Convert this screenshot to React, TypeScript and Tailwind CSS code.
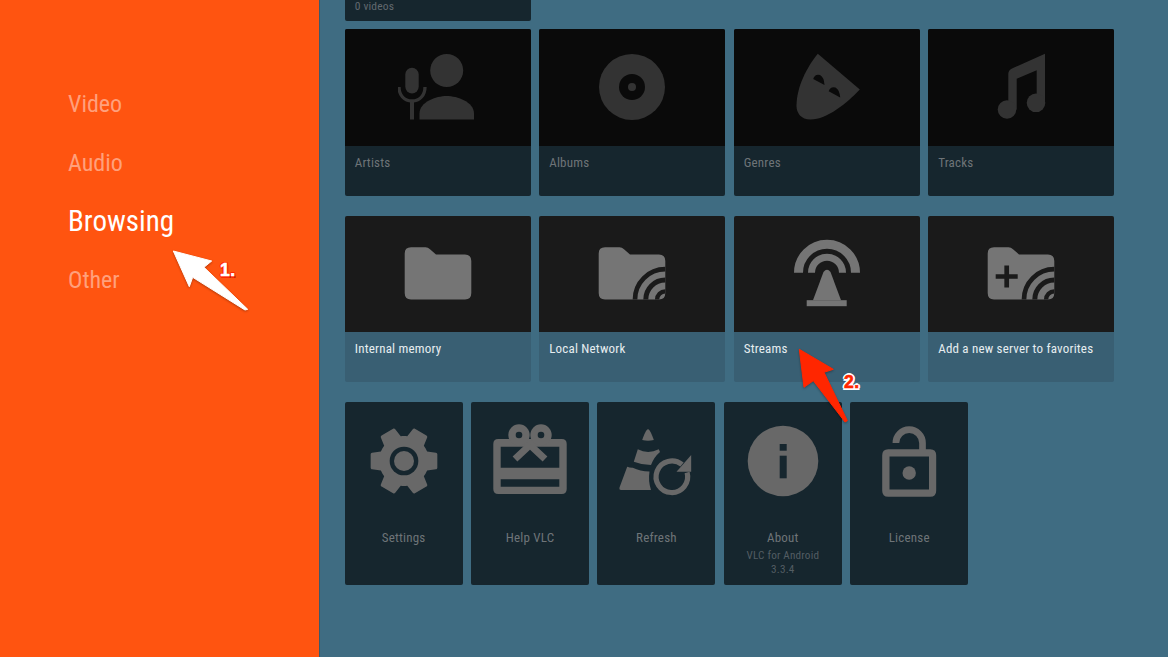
import type { ReactNode } from "react";

const roboto = "font-['Roboto',sans-serif] [font-stretch:75%]";

function Icon({ children, color }: { children: ReactNode; color: string }) {
  return (
    <svg viewBox="0 0 80 80" className="h-20 w-20" fill={color} style={{ color }}>
      {children}
    </svg>
  );
}

const FOLDER =
  "M13 13.2H27.5Q30 13.2 32 15.2L38 20.5H67Q73.3 20.5 73.3 27V59Q73.3 65.5 67 65.5H13Q6.7 65.5 6.7 59V19.5Q6.7 13.2 13 13.2Z";

function Waves({ bg }: { bg: string }) {
  const arc = (r: number) => `M${73.3 - r} 65.5A${r} ${r} 0 0 1 73.3 ${65.5 - r}`;
  return (
    <g fill="none" stroke={bg}>
      <path d={arc(8.2)} strokeWidth="4.3" />
      <path d={arc(19.5)} strokeWidth="5" />
      <path d={arc(30.3)} strokeWidth="4.7" />
    </g>
  );
}

const icons: Record<string, ReactNode> = {
  artists: (
    <Icon color="#333333">
      <circle cx="48.7" cy="23.5" r="16.5" />
      <path d="M21.5 72.5V66.5C21.5 55 38 49 48.7 49S76 55 76 66.5V72.5Z" />
      <rect x="7.3" y="20.8" width="13.4" height="25.7" rx="6.7" />
      <path d="M1 40C1 48 6 54 14 54S27 48 27 40" fill="none" stroke="#333333" strokeWidth="3.3" />
      <rect x="12" y="53" width="4" height="19.5" />
    </Icon>
  ),
  albums: (
    <Icon color="#333333">
      <circle cx="40" cy="40" r="33" />
      <circle cx="40" cy="40" r="13" fill="#0a0a0a" />
      <circle cx="40" cy="40" r="4" />
    </Icon>
  ),
  genres: (
    <Icon color="#333333">
      <path d="M30.8 6.8L72.8 42.5C60 56 40 72.5 23.5 72.5C14 72.5 9.5 66 9.5 59C9.5 40 20 20 30.8 6.8Z" />
      <path d="M26.2 32Q28 26.5 33 28Q37 30 37.5 38Z" fill="#0a0a0a" />
      <path d="M41.7 44.2Q43.5 39 48.5 40.5Q52.5 42.5 53.2 50.5Z" fill="#0a0a0a" />
    </Icon>
  ),
  tracks: (
    <Icon color="#333333">
      <path d="M64 6.8L31 21.5Q27.3 23 27.3 27V62.5H35.7V31.8L55.7 23.2V55.8H64Z" />
      <circle cx="26" cy="62.5" r="9.3" />
      <circle cx="55" cy="55.8" r="9.3" />
    </Icon>
  ),
  folder: (
    <Icon color="#757575">
      <path d={FOLDER} />
    </Icon>
  ),
  network: (
    <Icon color="#757575">
      <path d={FOLDER} />
      <Waves bg="#1a1a1a" />
    </Icon>
  ),
  streams: (
    <Icon color="#757575">
      <g fill="none" stroke="#757575">
        <path d="M11.5 38.8A28.5 28.5 0 0 1 68.5 38.8" strokeWidth="9" />
        <path d="M24.5 38.8A15.5 15.5 0 0 1 55.5 38.8" strokeWidth="7" />
      </g>
      <path d="M36.5 38Q40 33.5 43.5 38L54 66.2H26Z" stroke="#1a1a1a" strokeWidth="2.5" paintOrder="stroke" />
      <rect x="19.7" y="66.2" width="40" height="6" />
    </Icon>
  ),
  addServer: (
    <Icon color="#757575">
      <path d={FOLDER} />
      <Waves bg="#1a1a1a" />
      <path d="M25.7 31.5V53.5M14.7 42.5H36.7" fill="none" stroke="#1a1a1a" strokeWidth="4.7" />
    </Icon>
  ),
  settings: (
    <svg viewBox="0 0 24 24" className="h-20 w-20" fill="#686868">
      <path
        transform="rotate(90 12 12)"
        d="M19.43 12.98c.04-.32.07-.64.07-.98s-.03-.66-.07-.98l2.11-1.65c.19-.15.24-.42.12-.64l-2-3.46c-.12-.22-.39-.3-.61-.22l-2.49 1c-.52-.4-1.08-.73-1.69-.98l-.38-2.65C14.46 2.18 14.25 2 14 2h-4c-.25 0-.46.18-.49.42l-.38 2.65c-.61.25-1.17.59-1.69.98l-2.49-1c-.23-.09-.49 0-.61.22l-2 3.46c-.13.22-.07.49.12.64l2.11 1.65c-.04.32-.07.65-.07.98s.03.66.07.98l-2.11 1.65c-.19.15-.24.42-.12.64l2 3.46c.12.22.39.3.61.22l2.49-1c.52.4 1.08.73 1.69.98l.38 2.65c.03.24.24.42.49.42h4c.25 0 .46-.18.49-.42l.38-2.65c.61-.25 1.17-.59 1.69-.98l2.49 1c.23.09.49 0 .61-.22l2-3.46c.12-.22.07-.49-.12-.64l-2.11-1.65z"
      />
      <circle cx="12" cy="12" r="4.3" fill="#16262e" />
      <circle cx="12" cy="12" r="3" />
    </svg>
  ),
  help: (
    <Icon color="#686868">
      <path
        fillRule="evenodd"
        d="M8.3 18H71.7Q76.7 18 76.7 23V68Q76.7 73 71.7 73H8.3Q3.3 73 3.3 68V23Q3.3 18 8.3 18ZM10.7 25.7V46.7H69.3V25.7ZM10.7 58.3V65.7H69.3V58.3Z"
      />
      <circle cx="29" cy="14" r="10.7" />
      <circle cx="51" cy="14" r="10.7" />
      <circle cx="29" cy="14" r="3.3" fill="#16262e" />
      <circle cx="51" cy="14" r="3.3" fill="#16262e" />
      <path d="M40 24L25 38M40 24L55 38" fill="none" stroke="#686868" strokeWidth="7" />
    </Icon>
  ),
  refresh: (
    <Icon color="#686868">
      <path d="M28.5 13Q30.5 8.3 32 8.3Q33.5 8.3 35.5 13Q37.2 17 37.8 19Q32 20.5 26.2 19Q26.8 17 28.5 13Z" />
      <path d="M21.8 28.3Q32 33.5 42.8 28.3L44 31Q38 36 35 44Q26 44 17.8 40.7Z" />
      <path d="M11.2 45.7Q14 47 16.8 46.8Q24 50.5 33.5 50.5Q32 60 35 69H5Q3 69 3.5 66.5Z" />
      <path d="M66 43.6A15.8 15.8 0 1 0 71.1 51.5" fill="none" stroke="#686868" strokeWidth="5.2" />
      <path d="M75.2 34V50.7H60.5Z" />
    </Icon>
  ),
  about: (
    <Icon color="#686868">
      <circle cx="40" cy="40" r="35.3" />
      <rect x="36.7" y="23" width="7" height="6.7" fill="#16262e" />
      <rect x="36.7" y="34.7" width="7" height="22.6" fill="#16262e" />
    </Icon>
  ),
  license: (
    <Icon color="#686868">
      <path
        fillRule="evenodd"
        d="M19.2 28.3H61.2Q67.2 28.3 67.2 34.3V69.7Q67.2 75.7 61.2 75.7H19.2Q13.2 75.7 13.2 69.7V34.3Q13.2 28.3 19.2 28.3ZM20.5 35.5V68.5H60V35.5Z"
      />
      <circle cx="40.2" cy="52" r="6.7" />
      <path d="M26.9 22A13.3 13.3 0 0 1 53.5 22V30" fill="none" stroke="#686868" strokeWidth="6.7" />
    </Icon>
  ),
};

function MediaCard({ icon, label, dim }: { icon: string; label: string; dim?: boolean }) {
  return (
    <div className={`h-[166.3px] overflow-hidden rounded-[2px] ${dim ? "bg-[#16262e]" : "bg-[#395f73]"}`}>
      <div className={`flex h-[116.4px] items-center justify-center ${dim ? "bg-[#0a0a0a]" : "bg-[#1a1a1a] pt-[1px]"}`}>
        {icons[icon]}
      </div>
      <p
        className={`${roboto} pl-2.5 text-[13px] leading-4 tracking-[0.2px] ${
          dim ? "pt-[9.3px] text-[#6e7478]" : "pt-[8.8px] text-[#e6edf0]"
        }`}
      >
        {label}
      </p>
    </div>
  );
}

function SquareCard({ icon, label, sub }: { icon: string; label: string; sub?: string[] }) {
  return (
    <div className="flex h-[183.3px] flex-col items-center rounded-[2px] bg-[#16262e] pt-[19.3px]">
      {icons[icon]}
      <p className={`${roboto} mt-[29px] text-[13px] leading-4 tracking-[0.2px] text-[#6e7478]`}>{label}</p>
      {sub && (
        <p className={`${roboto} mt-[3.5px] text-center text-[11.2px] leading-[14px] tracking-[0.2px] text-[#535d63]`}>
          {sub.map((s) => (
            <span key={s} className="block">
              {s}
            </span>
          ))}
        </p>
      )}
    </div>
  );
}

function Annotations() {
  return (
    <>
      <svg className="pointer-events-none absolute left-0 top-0 h-[657px] w-[1168px]" viewBox="0 0 1168 657">
        <polygon
          className="drop-shadow-[0_1px_1px_rgba(0,0,0,0.3)]"
          points="173.3,251 211.7,261 204,267.3 247.7,309.3 245,310 192.7,277.3 189.3,286.7"
          fill="#ffffff"
          stroke="#ffffff"
          strokeWidth="1"
          strokeLinejoin="round"
        />
        <polygon
          className="drop-shadow-[0_1px_1px_rgba(0,0,0,0.3)]"
          points="799.3,349.3 833.3,369.3 824,372.3 847.3,420.7 845,422 813.3,380.7 804,387.3"
          fill="#ff2600"
          stroke="#ff2600"
          strokeWidth="1"
          strokeLinejoin="round"
        />
      </svg>
      <span className="absolute left-[220px] top-[260px] font-['Liberation_Sans',sans-serif] text-[17.5px] leading-5 font-bold tracking-[0.5px] text-white [-webkit-text-stroke:0.6px_#ffffff] [text-shadow:1.5px_0_0_#ff2600,-1.5px_0_0_#ff2600,0_1.5px_0_#ff2600,0_-1.5px_0_#ff2600,1.5px_1.5px_0_#c02000,-1px_-1px_0_#ff2600,1px_-1px_0_#ff2600,-1px_1px_0_#ff2600]">
        1.
      </span>
      <span className="absolute left-[844px] top-[372px] font-['Liberation_Sans',sans-serif] text-[17.5px] leading-5 font-bold tracking-[0.5px] text-[#ff2600] [-webkit-text-stroke:0.6px_#ff2600] [text-shadow:2px_0_0_#ffffff,-2px_0_0_#ffffff,0_2px_0_#ffffff,0_-2px_0_#ffffff,1.5px_1.5px_0_#ffffff,-1.5px_-1.5px_0_#ffffff,1.5px_-1.5px_0_#ffffff,-1.5px_1.5px_0_#ffffff]">
        2.
      </span>
    </>
  );
}

export default function App() {
  return (
    <div className="relative flex h-[657px] w-[1168px] overflow-hidden bg-[#3f6c82]">
      <aside className="h-full w-[320px] shrink-0 border-r border-[#3a5a6c] bg-[#ff5410] pl-[68px] pt-[85px]">
        <nav className={`${roboto} flex flex-col gap-[20.7px] text-[24px] leading-[38px] text-[#ffa07c]`}>
          <span>Video</span>
          <span>Audio</span>
          <span className="text-[29px] text-white">Browsing</span>
          <span>Other</span>
        </nav>
      </aside>

      <main className="flex w-[770px] flex-col pl-[24.7px]">
        <div className="h-[21.3px] w-[186.3px] rounded-b-[2px] bg-[#16262e] pl-2.5">
          <p className={`${roboto} text-[11.5px] leading-3 tracking-[0.2px] text-[#62696e]`}>0 videos</p>
        </div>
        <div className="mt-2 grid w-[769.5px] grid-cols-4 gap-x-[8.5px]">
          <MediaCard dim icon="artists" label="Artists" />
          <MediaCard dim icon="albums" label="Albums" />
          <MediaCard dim icon="genres" label="Genres" />
          <MediaCard dim icon="tracks" label="Tracks" />
        </div>
        <div className="mt-[20.2px] grid w-[769.5px] grid-cols-4 gap-x-[8.5px]">
          <MediaCard icon="folder" label="Internal memory" />
          <MediaCard icon="network" label="Local Network" />
          <MediaCard icon="streams" label="Streams" />
          <MediaCard icon="addServer" label="Add a new server to favorites" />
        </div>
        <div className="mt-[19.5px] grid w-[623.5px] grid-cols-5 gap-x-[8.5px]">
          <SquareCard icon="settings" label="Settings" />
          <SquareCard icon="help" label="Help VLC" />
          <SquareCard icon="refresh" label="Refresh" />
          <SquareCard icon="about" label="About" sub={["VLC for Android", "3.3.4"]} />
          <SquareCard icon="license" label="License" />
        </div>
      </main>

      <Annotations />
    </div>
  );
}
